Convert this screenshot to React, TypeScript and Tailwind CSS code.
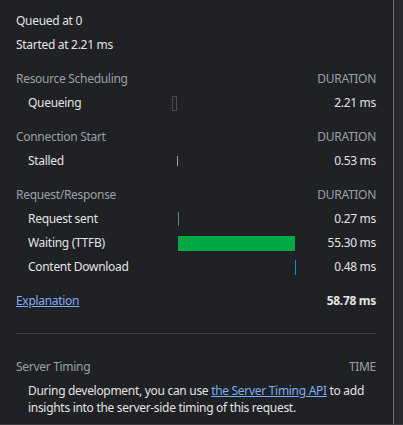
import React from 'react';

const TOTAL = 58.78;
const TRACK = 124;

type Phase = {
  label: string;
  start: number;
  duration: number;
  kind: 'queue' | 'stall' | 'sent' | 'wait' | 'download';
};

const sections: { title: string; rows: Phase[] }[] = [
  {
    title: 'Resource Scheduling',
    rows: [{ label: 'Queueing', start: 0, duration: 2.21, kind: 'queue' }],
  },
  {
    title: 'Connection Start',
    rows: [{ label: 'Stalled', start: 2.21, duration: 0.53, kind: 'stall' }],
  },
  {
    title: 'Request/Response',
    rows: [
      { label: 'Request sent', start: 2.74, duration: 0.27, kind: 'sent' },
      { label: 'Waiting (TTFB)', start: 3.01, duration: 55.3, kind: 'wait' },
      { label: 'Content Download', start: 58.31, duration: 0.48, kind: 'download' },
    ],
  },
];

const barClass: Record<Phase['kind'], string> = {
  queue: 'h-[15px] border border-[#4a4c50] bg-transparent',
  stall: 'h-[10px] bg-[#9aa0a6]',
  sent: 'h-[14px] bg-[#4f8b8e]',
  wait: 'h-[15px] bg-[#00a846]',
  download: 'h-[15px] bg-[#1a8bd0]',
};

function Bar({ phase }: { phase: Phase }) {
  const left = Math.round((phase.start / TOTAL) * TRACK);
  const width = Math.max(1, Math.round((phase.duration / TOTAL) * TRACK));
  return (
    <div className="w-[124px] flex items-center">
      <div className={barClass[phase.kind]} style={{ marginLeft: left, width }} />
    </div>
  );
}

export default function App() {
  return (
    <div
      className="w-[403px] h-[425px] bg-[#202124] flex flex-col text-[12px] tracking-[-0.3px] text-[#e3e3e3]"
      style={{ fontFamily: '"Segoe UI", "Noto Sans", sans-serif' }}
    >
      <div className="flex flex-1">
        <div className="w-[394px] border-r border-[#6b6d70] pl-4 pr-[17px] pt-[9px]">
          <div className="h-6 flex items-center">Queued at 0</div>
          <div className="h-6 flex items-center">Started at 2.21 ms</div>

          {sections.map((section) => (
            <div key={section.title}>
              <div className="h-6 mt-[10px] flex items-center justify-between text-[#9aa0a6]">
                <span>{section.title}</span>
                <span>DURATION</span>
              </div>
              {section.rows.map((row) => (
                <div key={row.label} className="h-6 flex items-center">
                  <div className="w-[156px] pl-3">{row.label}</div>
                  <Bar phase={row} />
                  <div className="flex-1 text-right">{row.duration.toFixed(2)} ms</div>
                </div>
              ))}
            </div>
          ))}

          <div className="h-6 mt-[10px] flex items-center justify-between">
            <a className="text-[#7cacf8] underline">Explanation</a>
            <span className="font-bold">{TOTAL.toFixed(2)} ms</span>
          </div>

          <div className="mt-5 border-t border-[#3c3d40]" />

          <div className="h-6 mt-[21px] flex items-center justify-between text-[#9aa0a6]">
            <span>Server Timing</span>
            <span>TIME</span>
          </div>
          <p className="mt-[3px] pl-3 leading-[17px]">
            During development, you can use{' '}
            <a className="text-[#7cacf8] underline">the Server Timing API</a> to add insights into the
            server-side timing of this request.
          </p>
        </div>
        <div className="flex-1 bg-[#28292c]" />
      </div>
      <div className="h-px bg-[#3c3d40]" />
    </div>
  );
}
